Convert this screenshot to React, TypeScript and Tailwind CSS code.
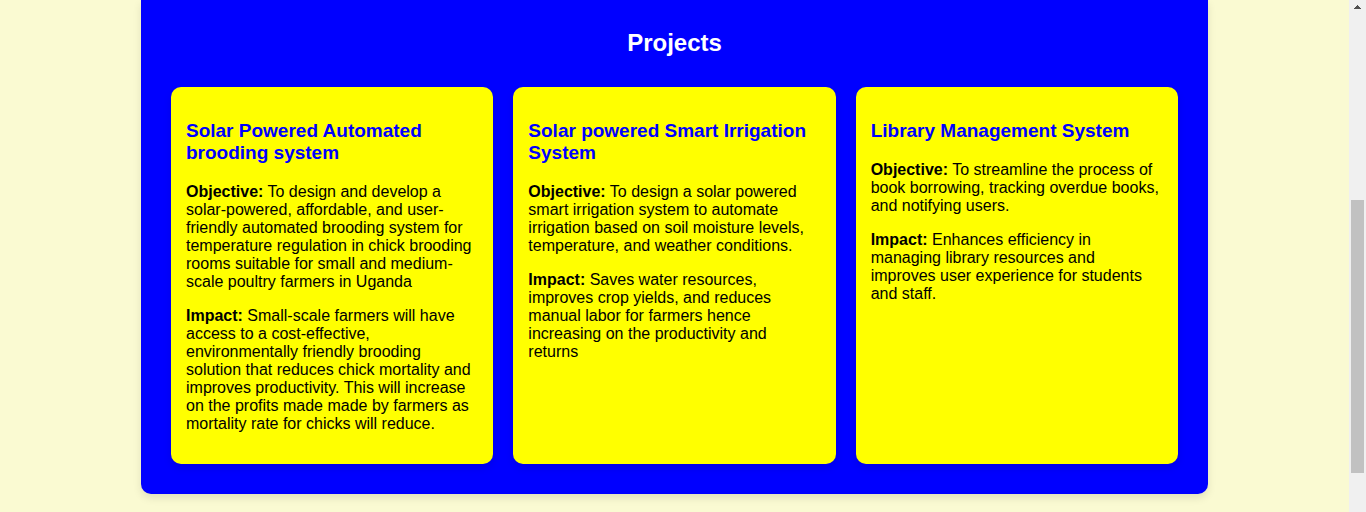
type Project = {
  title: string;
  objective: string;
  impact: string;
};

const projects: Project[] = [
  {
    title: "Solar Powered Automated brooding system",
    objective:
      "To design and develop a solar-powered, affordable, and user-friendly automated brooding system for temperature regulation in chick brooding rooms suitable for small and medium-scale poultry farmers in Uganda",
    impact:
      "Small-scale farmers will have access to a cost-effective, environmentally friendly brooding solution that reduces chick mortality and improves productivity. This will increase on the profits made made by farmers as mortality rate for chicks will reduce.",
  },
  {
    title: "Solar powered Smart Irrigation System",
    objective:
      "To design a solar powered smart irrigation system to automate irrigation based on soil moisture levels, temperature, and weather conditions.",
    impact:
      "Saves water resources, improves crop yields, and reduces manual labor for farmers hence increasing on the productivity and returns",
  },
  {
    title: "Library Management System",
    objective:
      "To streamline the process of book borrowing, tracking overdue books, and notifying users.",
    impact:
      "Enhances efficiency in managing library resources and improves user experience for students and staff.",
  },
];

function ProjectCard({ title, objective, impact }: Project) {
  return (
    <article className="rounded-[10px] bg-[#ffff00] px-[15px] pt-[33px] pb-[31px] text-base leading-[18px] text-black shadow-[0_4px_8px_rgba(0,0,0,0.1)]">
      <h3 className="mb-[19px] text-[19px] leading-[22px] font-bold text-[#0000ff]">{title}</h3>
      <p className="mb-4">
        <strong>Objective:</strong> {objective}
      </p>
      <p>
        <strong>Impact:</strong> {impact}
      </p>
    </article>
  );
}

function ScrollTrack() {
  return (
    <div aria-hidden="true" className="flex w-[17px] shrink-0 flex-col items-center bg-[#f0f0f0]">
      <svg width="17" height="17" viewBox="0 0 17 17" shapeRendering="crispEdges" fill="#505050">
        <path d="M8 5h1v1h1v1h1v1h1v1H5V8h1V7h1V6h1z" />
      </svg>
      <div className="mt-[183px] h-[273px] w-[13px] bg-[#c1c1c1]" />
    </div>
  );
}

export default function App() {
  return (
    <div className="flex min-h-screen bg-[#fafad2] font-['Liberation_Sans',Arial,sans-serif]">
      <main className="min-w-0 flex-1 px-4 lg:px-[141px]">
        <section className="rounded-b-[10px] bg-[#0000ff] px-[30px] pt-[29px] pb-[30px] shadow-[0_4px_8px_rgba(0,0,0,0.1)]">
          <h2 className="mb-[30px] text-center text-2xl leading-7 font-bold text-white">Projects</h2>
          <div className="grid grid-cols-1 gap-5 md:grid-cols-3">
            {projects.map((project) => (
              <ProjectCard key={project.title} {...project} />
            ))}
          </div>
        </section>
      </main>
      <ScrollTrack />
    </div>
  );
}
